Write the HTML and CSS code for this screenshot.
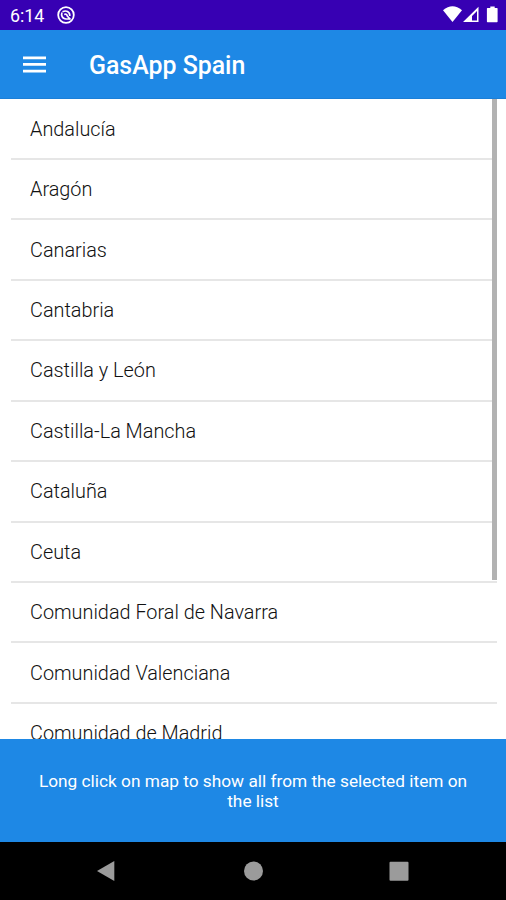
FILE: index.html
```html
<!DOCTYPE html>
<html lang="en">
<head>
<meta charset="utf-8">
<title>GasApp Spain</title>
<link rel="stylesheet" href="styles.css">
</head>
<body>
<div class="phone">
  <div class="status">
    <span class="clock">6:14</span>
    <svg class="notice" width="18" height="18" viewBox="0 0 18 18" fill="none" stroke="#fff"><circle cx="9" cy="9" r="7.800" stroke-width="1.800"/><path d="M5 6.500C4 9 5 13 9 13h3.500M5.500 5.800C9 4 13 5.500 12.800 10M7.200 8.500c2-.8 3 .2 3 1.500l3.300 3.500" stroke-width="1.700"/></svg>
    <svg class="system" width="56" height="18" viewBox="0 0 56 18" fill="#fff"><path d="M0 4.200Q9.500-3.500 19 4.200L9.500 16z"/><path fill-rule="evenodd" d="M20 16 35.500.8V16zM29 14.500h5V5l-5 5z"/><path d="M44.500 2h2.800V.4h4.400V2h2.300q.6 0 .6.600v13q0 .6-.6.600h-9.500q-.6 0-.6-.6v-13q0-.6.6-.6z"/></svg>
  </div>
  <header class="bar">
    <svg class="menu" width="23" height="18" viewBox="0 0 23 18" fill="#fff"><path d="M0 .5h23v2.700H0zM0 7.100h23v2.700H0zM0 13.700h23v2.700H0z"/></svg>
    <h1 class="title">GasApp Spain</h1>
  </header>
  <main class="content">
    <ul class="list">
      <li>Andalucía</li>
      <li>Aragón</li>
      <li>Canarias</li>
      <li>Cantabria</li>
      <li>Castilla y León</li>
      <li>Castilla-La Mancha</li>
      <li>Cataluña</li>
      <li>Ceuta</li>
      <li>Comunidad Foral de Navarra</li>
      <li>Comunidad Valenciana</li>
      <li>Comunidad de Madrid</li>
    </ul>
    <div class="scrollbar"></div>
  </main>
  <footer class="hint">Long click on map to show all from the selected item on<br>the list</footer>
  <nav class="nav">
    <svg width="20" height="22" viewBox="0 0 20 22"><path d="M1 11 18.300 1v20z" fill="#9b9b9b"/></svg>
    <svg width="20" height="22" viewBox="0 0 20 22"><circle cx="10.500" cy="11" r="9.500" fill="#9b9b9b"/></svg>
    <svg width="20" height="22" viewBox="0 0 20 22"><rect x=".5" y="1.700" width="19" height="19" rx="1" fill="#9b9b9b"/></svg>
  </nav>
</div>
</body>
</html>
```

FILE: styles.css
```css
* { box-sizing: border-box; }
body { margin: 0; font-family: Roboto, sans-serif; }
.phone { width: 506px; height: 900px; display: flex; flex-direction: column; background: #fff; overflow: hidden; }
.status { height: 29.500px; flex: none; display: flex; align-items: flex-start; padding: 6px 7px 0 10px; background: #3700b3; color: #fff; }
.clock { width: 47px; font-size: 17.800px; line-height: 20px; }
.system { margin-left: auto; }
.bar { height: 69px; flex: none; display: flex; align-items: center; padding: 3px 23px 0; background: #1e88e5; border-bottom: 1px solid #1b7fd8; }
.menu { margin-right: 43px; }
.title { margin: 0; padding-top: 2px; color: #fff; font-size: 24.900px; line-height: 30px; font-weight: 500; }
.content { height: 640px; flex: none; position: relative; overflow: hidden; }
.list { margin: 0; padding: 1px 9px 0 11px; list-style: none; }
.list li { height: 60.440px; padding: 1px 19px 0; display: flex; align-items: center; border-bottom: 2px solid #e6e6e6; color: #111; font-size: 19.850px; font-weight: 300; }
.scrollbar { position: absolute; top: 0; right: 9px; width: 5px; height: 481px; background: #b2b2b2; }
.hint { height: 103.500px; flex: none; padding-top: 32px; background: #1e88e5; color: #fff; font-size: 17.280px; line-height: 20.500px; text-align: center; }
.nav { flex: 1; display: flex; justify-content: space-between; align-items: center; padding: 0 97px 0 96px; background: #000; }
```
